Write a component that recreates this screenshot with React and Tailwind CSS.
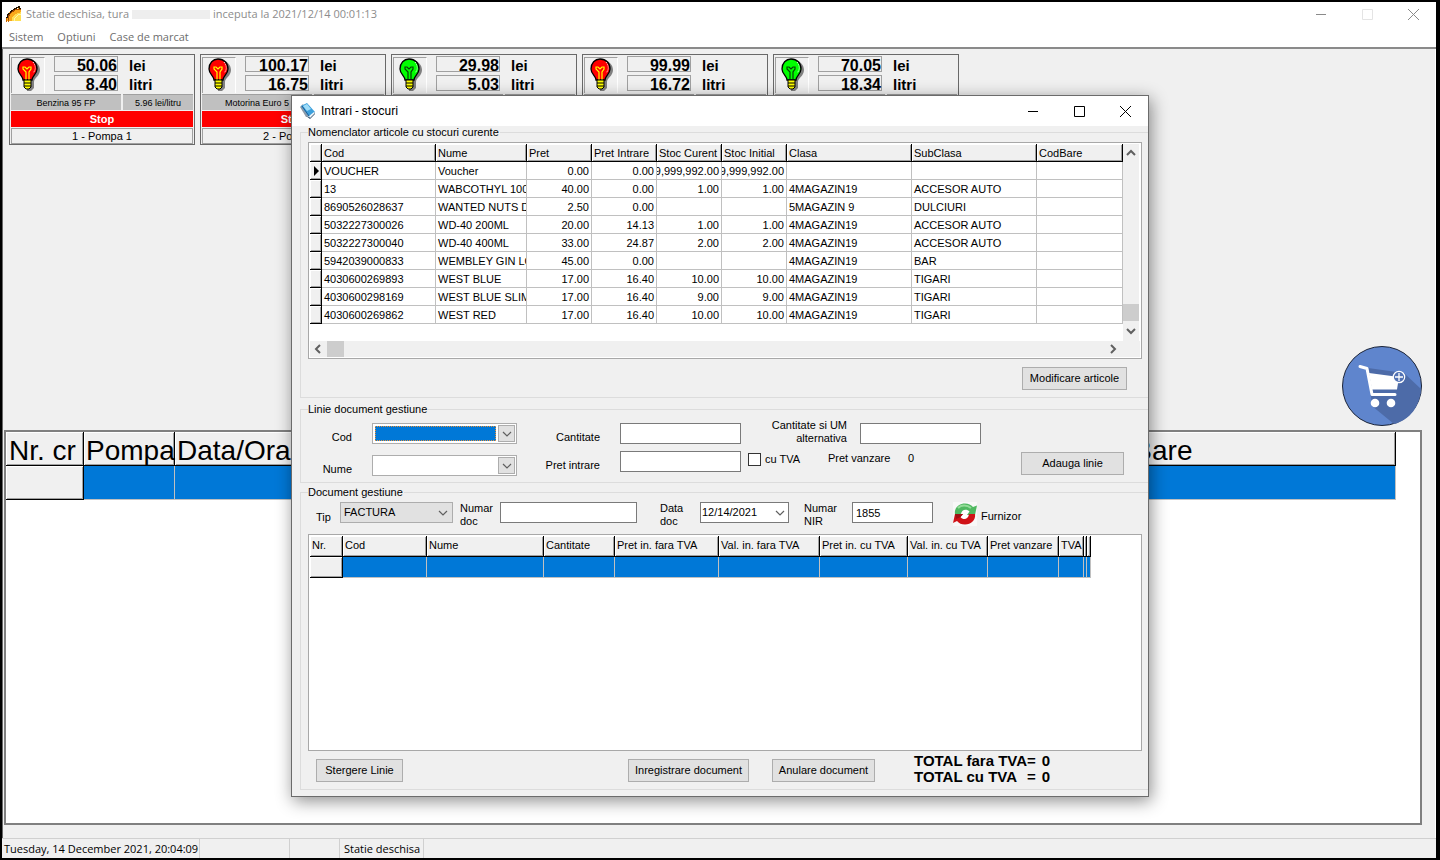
import React from 'react';

const pumps = [
    { id: 1, lei: '50.06', litri: '8.40', fuel: 'Benzina 95 FP', price: '5.96 lei/litru', status: 'Stop', name: '1 - Pompa 1', color: '#ff0000', wire: '#ffff00' },
    { id: 2, lei: '100.17', litri: '16.75', fuel: 'Motorina Euro 5', price: '', status: 'Stop', name: '2 - Pompa 2', color: '#ff0000', wire: '#ffff00' },
    { id: 3, lei: '29.98', litri: '5.03', color: '#00ff00', wire: '#064006' },
    { id: 4, lei: '99.99', litri: '16.72', color: '#ff0000', wire: '#ffff00' },
    { id: 5, lei: '70.05', litri: '18.34', color: '#00ff00', wire: '#064006' },
];

const articleColumns = [
    { name: 'Cod', width: 'w-[114px]' },
    { name: 'Nume', width: 'w-[91px]' },
    { name: 'Pret', width: 'w-[65px]', right: true },
    { name: 'Pret Intrare', width: 'w-[65px]', right: true },
    { name: 'Stoc Curent', width: 'w-[65px]', right: true },
    { name: 'Stoc Initial', width: 'w-[65px]', right: true },
    { name: 'Clasa', width: 'w-[125px]' },
    { name: 'SubClasa', width: 'w-[125px]' },
    { name: 'CodBare', width: 'w-[86px]' },
];

const articles = [
    ['VOUCHER', 'Voucher', '0.00', '0.00', '9,999,992.00', '9,999,992.00', '', '', ''],
    ['13', 'WABCOTHYL 100', '40.00', '0.00', '1.00', '1.00', '4MAGAZIN19', 'ACCESOR AUTO', ''],
    ['8690526028637', 'WANTED NUTS D', '2.50', '0.00', '', '', '5MAGAZIN 9', 'DULCIURI', ''],
    ['5032227300026', 'WD-40 200ML', '20.00', '14.13', '1.00', '1.00', '4MAGAZIN19', 'ACCESOR AUTO', ''],
    ['5032227300040', 'WD-40 400ML', '33.00', '24.87', '2.00', '2.00', '4MAGAZIN19', 'ACCESOR AUTO', ''],
    ['5942039000833', 'WEMBLEY GIN LO', '45.00', '0.00', '', '', '4MAGAZIN19', 'BAR', ''],
    ['4030600269893', 'WEST BLUE', '17.00', '16.40', '10.00', '10.00', '4MAGAZIN19', 'TIGARI', ''],
    ['4030600298169', 'WEST BLUE SLIM', '17.00', '16.40', '9.00', '9.00', '4MAGAZIN19', 'TIGARI', ''],
    ['4030600269862', 'WEST RED', '17.00', '16.40', '10.00', '10.00', '4MAGAZIN19', 'TIGARI', ''],
];

const documentColumns = [
    { name: 'Nr.', width: 'w-[33px]' },
    { name: 'Cod', width: 'w-[84px]' },
    { name: 'Nume', width: 'w-[117px]' },
    { name: 'Cantitate', width: 'w-[71px]' },
    { name: 'Pret in. fara TVA', width: 'w-[104px]' },
    { name: 'Val. in. fara TVA', width: 'w-[101px]' },
    { name: 'Pret in. cu TVA', width: 'w-[88px]' },
    { name: 'Val. in. cu TVA', width: 'w-[80px]' },
    { name: 'Pret vanzare', width: 'w-[71px]' },
    { name: 'TVA', width: 'w-[25px]' },
    { name: '', width: 'w-[3px]' },
    { name: '', width: 'w-[4px]' },
];

const raised = 'bg-[#f0f0f0] border-r border-b border-black shadow-[inset_1px_1px_#ffffff,inset_-1px_-1px_#a0a0a0]';
const field = 'h-[21px] border border-[#7a7a7a] bg-white px-[3px] outline-none';
const push = 'h-[23px] border border-[#adadad] bg-[#e1e1e1] text-center whitespace-nowrap';

function AppIcon() {
    return (
        <svg width="16" height="16" viewBox="0 0 16 16" shapeRendering="crispEdges">
            <path d="M1 15V9L4 5L8 3L15 2V15Z" fill="#f9a81c" />
            <path d="M6 15V12L9 8L15 6V15Z" fill="#ffdf52" />
            <path d="M8 15L9 12L12 9L15 8" fill="none" stroke="#fff3a8" />
            <path d="M0 11H1V8H2V7H4V5H5V4H7V3H8V2H10V1H12V0H13V2H15" fill="none" stroke="#241400" />
            <path d="M2 14V11L5 7L9 4L15 3" fill="none" stroke="#a84a00" />
            <path d="M0 12V16M2 14V16" stroke="#c86400" />
        </svg>
    );
}

function BookIcon() {
    return (
        <svg width="16" height="16" viewBox="0 0 16 16">
            <path d="M0 4L3 1L9 13L6 14Z" fill="#8d9aa8" />
            <path d="M1 3L7 0L15 9L9 14Z" fill="#3da0dc" />
            <path d="M3 3L7 1L11 6L7 8Z" fill="#9fdcf8" />
            <path d="M9 14L15 9L15 11L10 16L6 13Z" fill="#35516c" />
            <path d="M9 13L14 9L15 10L10 15Z" fill="#eef5fa" />
            <path d="M2 3L9 13" stroke="#1c5c94" />
        </svg>
    );
}

function Bulb({ color, wire }) {
    return (
        <svg width="26" height="33" viewBox="0 0 26 33">
            <path d="M13 2C20 2 24 7 24 12C24 18 18 20 18 24V30L15 33H11V24Z" fill="#808080" />
            <path d="M11 1C17 1 21 5 21 11C21 16 16 18 16 22H7C7 18 2 16 2 11C2 5 6 1 11 1Z" fill={color} stroke="#000" strokeWidth="1.3" />
            <path d="M17 4C20 8 20 12 17 15" fill="none" stroke="#fff" strokeDasharray="1 1" />
            <path d="M10 22V14L7 11V9H9L11 11L13 9L15 9V11L13 14V22" fill="none" stroke={wire} strokeWidth="1.2" />
            <path d="M8 22H15V29L13 31H10L8 29Z" fill="#ffff00" stroke="#000" />
            <path d="M8 25H15M8 28H15" stroke="#000" />
        </svg>
    );
}

function CartIcon() {
    return (
        <svg width="80" height="80" viewBox="0 0 80 80">
            <circle cx="40" cy="40" r="39.5" fill="#5f85cd" stroke="#1b2438" />
            <path d="M62 27L79 43C78 60 68 74 52 78L30 60L26 22Z" fill="#4d6ba8" />
            <path d="M18 20.500L25 22.500L30 48.500H53" fill="none" stroke="#fff" strokeWidth="3" strokeLinecap="round" strokeLinejoin="round" />
            <path d="M27 27L57 31L55 43.500H30Z" fill="#fff" />
            <circle cx="33" cy="57" r="4.300" fill="#fff" />
            <circle cx="49" cy="57" r="4.300" fill="#fff" />
            <circle cx="57" cy="31" r="5.700" fill="#5272b4" stroke="#fff" strokeWidth="1.200" />
            <path d="M57 27V35M53 31H61" stroke="#fff" strokeWidth="1.300" />
        </svg>
    );
}

function RefreshIcon() {
    return (
        <svg width="24" height="24" viewBox="0 0 24 24">
            <rect width="24" height="24" fill="#f8f8f8" />
            <circle cx="12" cy="12" r="5" fill="#fff" />
            <path d="M2 12C1 6 6 1.500 12 1.500C15.500 1.500 18 3 20 5L24 3.500L22 13H14L16.500 9.500C14 6.500 8.500 7 8 12Z" fill="#4fb860" />
            <path d="M5 6C8 2.500 14 2.500 18 6" fill="none" stroke="#93dc98" strokeWidth="2" />
            <path d="M22 12C23 18 18 22.500 12 22.500C8.500 22.500 6 21.500 4 19L0 21L2 12L10 12L7.500 15C10 18.500 15.500 17.500 16 12Z" fill="#d01217" />
            <path d="M2 12L10 12L7.500 15L3 17Z" fill="#a01014" />
        </svg>
    );
}

function Chevron({ d = 'M1 3L5 7L9 3', thick }) {
    return (
        <svg width="10" height="10" viewBox="0 0 10 10" fill="none" stroke="#606060" strokeWidth={thick ? 2 : 1.2} aria-hidden="true">
            <path d={d} />
        </svg>
    );
}

function WindowButtons({ main }) {
    return (
        <div className={main ? 'flex text-[#8a8a8a]' : 'flex text-black'}>
            <button aria-label="Minimize" className="w-[45px] h-6 flex items-center justify-center">
                <svg width="11" height="11" stroke="currentColor"><path d="M0 5.500H10" /></svg>
            </button>
            <button aria-label="Maximize" className="w-[46px] h-6 flex items-center justify-center">
                <svg width="11" height="11" fill="none" stroke={main ? '#e4e4e4' : 'currentColor'}><path d="M.5 .5H10.500V10.500H.5Z" /></svg>
            </button>
            <button aria-label="Close" className="w-[46px] h-6 flex items-center justify-center">
                <svg width="11" height="11" stroke="currentColor"><path d="M0 0L11 11M11 0L0 11" /></svg>
            </button>
        </div>
    );
}

function Pump({ pump }) {
    return (
        <div className="w-[186px] h-[91px] shrink-0 border border-[#696969] p-px flex flex-col">
            <div className="flex h-[38px]">
                <div className="w-[34px] h-9 mt-px pl-1 border-t border-l border-[#a0a0a0] border-r border-r-white">
                    <Bulb color={pump.color} wire={pump.wire} />
                </div>
                <div className="ml-[9px] w-16 flex flex-col gap-[3px] text-right text-[16px] leading-[18px] font-bold">
                    <div className="h-4 border border-[#a0a0a0]">{pump.lei}</div>
                    <div className="h-4 border border-[#a0a0a0]">{pump.litri}</div>
                </div>
                <div className="ml-[11px] text-[15px] leading-[19px] font-bold">
                    <div>lei</div>
                    <div>litri</div>
                </div>
            </div>
            <div className="flex gap-[2px] h-4 text-[9px] leading-4 text-center">
                <div className="w-[110px] bg-[#c0c0c0] border-t border-[#a0a0a0]">{pump.fuel}</div>
                <div className="flex-1 bg-[#c0c0c0] border-t border-[#a0a0a0]">{pump.price}</div>
            </div>
            <div className="mt-px h-4 bg-[#ff0000] text-white text-[11px] leading-4 font-bold text-center">{pump.status}</div>
            <div className="mt-px flex-1 border border-[#a0a0a0] text-[11px] leading-[14px] text-center">{pump.name}</div>
        </div>
    );
}

function ArticleTable() {
    return (
        <div className="h-[217px] border border-[#a8a8a8] bg-white p-px flex flex-col">
            <div className="flex flex-1 min-h-0">
                <div className="flex-1 overflow-hidden">
                    <table className="table-fixed w-[813px] border-separate border-spacing-0 text-left">
                        <thead>
                            <tr>
                                <th className={`w-3 h-[18px] p-0 ${raised}`}></th>
                                {articleColumns.map((col) => (
                                    <th key={col.name} className={`${col.width} h-[18px] p-0 pl-[2px] font-normal leading-[16px] whitespace-nowrap overflow-hidden ${raised}`}>{col.name}</th>
                                ))}
                            </tr>
                        </thead>
                        <tbody>
                            {articles.map((row, i) => (
                                <tr key={row[0]}>
                                    <td className={`h-[18px] p-0 ${raised}`}>
                                        {i === 0 && <svg width="10" height="12" className="block"><path d="M4 1V11L9 6Z" /></svg>}
                                    </td>
                                    {row.map((value, j) => (
                                        <td key={j} className="h-[18px] p-0 border-r border-b border-[#c0c0c0]">
                                            <div className={articleColumns[j].right ? 'flex justify-end overflow-hidden whitespace-nowrap pr-[2px] leading-[16px]' : 'overflow-hidden whitespace-nowrap pl-[2px] leading-[16px]'}>{value}</div>
                                        </td>
                                    ))}
                                </tr>
                            ))}
                        </tbody>
                    </table>
                </div>
                <div className="w-[17px] bg-[#f0f0f0] flex flex-col items-center border-r border-white">
                    <div className="h-[17px] flex items-center"><Chevron d="M1 7L5 3L9 7" thick /></div>
                    <div className="mt-auto h-[17px] w-full bg-[#cdcdcd]"></div>
                    <div className="h-5 flex items-center"><Chevron thick /></div>
                </div>
            </div>
            <div className="h-4 bg-[#f0f0f0] flex items-center pl-[3px] pr-[22px]">
                <Chevron d="M7 1L3 5L7 9" thick />
                <div className="ml-1 mr-auto w-[17px] h-full bg-[#cdcdcd]"></div>
                <Chevron d="M3 1L7 5L3 9" thick />
            </div>
        </div>
    );
}

function DocumentTable() {
    return (
        <div className="h-[217px] border border-[#a8a8a8] bg-white p-px overflow-hidden">
            <table className="table-fixed w-[781px] border-separate border-spacing-0 text-left">
                <thead>
                    <tr>
                        {documentColumns.map((col, i) => (
                            <th key={i} className={`${col.width} h-[21px] p-0 pb-[2px] font-normal whitespace-nowrap overflow-hidden ${raised}`}>
                                {col.name && <span className="pl-[2px]">{col.name}</span>}
                            </th>
                        ))}
                    </tr>
                </thead>
                <tbody>
                    <tr>
                        {documentColumns.map((col, i) => (
                            <td key={i} className={i === 0 ? `h-[21px] p-0 ${raised}` : 'h-[21px] p-0 bg-[#0078d7] border-r border-b border-[#c0c0c0]'}></td>
                        ))}
                    </tr>
                </tbody>
            </table>
        </div>
    );
}

function Combo({ id, active }) {
    return (
        <div className="w-[145px] h-[21px] border border-[#adadad] bg-white flex p-px">
            <select id={id} className={active ? 'appearance-none flex-1 m-px mr-[2px] bg-[#0078d7] border border-dotted border-[#e8913a] outline-none' : 'appearance-none flex-1 bg-white outline-none'}></select>
            <span className="w-[17px] border border-[#adadad] bg-[#e1e1e1] flex items-center justify-center"><Chevron /></span>
        </div>
    );
}

function Group({ title, className, children }) {
    return (
        <fieldset className={`ml-2 border border-r-0 border-[#dcdcdc] pl-[7px] pr-[6px] ${className}`}>
            <legend className="h-[13px] leading-[13px] pr-px">{title}</legend>
            {children}
        </fieldset>
    );
}

function StockDialog() {
    return (
        <div role="dialog" aria-label="Intrari - stocuri" className="absolute top-[93px] left-[289px] right-[287px] min-w-[858px] h-[702px] border border-[#6b6b6b] bg-[#f0f0f0] shadow-[2px_4px_16px_rgba(0,0,0,0.45)] text-[11px] leading-[13px]">
            <div className="h-[30px] bg-white flex items-center pl-2 font-[Roboto,sans-serif] text-[12px]">
                <BookIcon />
                <h2 className="ml-[5px] mr-auto">Intrari - stocuri</h2>
                <WindowButtons />
            </div>

            <Group title="Nomenclator articole cu stocuri curente" className="h-[272px]">
                <div className="pt-[3px]">
                    <ArticleTable />
                    <div className="flex justify-end pt-2 pr-[15px]">
                        <button className={`w-[105px] ${push}`}>Modificare articole</button>
                    </div>
                </div>
            </Group>

            <Group title="Linie document gestiune" className="mt-[5px] h-[80px]">
                <div className="flex items-start pt-[7px]">
                    <div className="w-11 shrink-0 text-right flex flex-col gap-[19px] pt-2">
                        <label htmlFor="cod">Cod</label>
                        <label htmlFor="nume">Nume</label>
                    </div>
                    <div className="ml-5 flex flex-col gap-[11px]">
                        <Combo id="cod" active />
                        <Combo id="nume" />
                    </div>
                    <div className="w-[83px] text-right flex flex-col gap-[15px] pt-2">
                        <label htmlFor="cantitate">Cantitate</label>
                        <label htmlFor="pret">Pret intrare</label>
                    </div>
                    <div className="ml-5 w-[121px] flex flex-col gap-[7px]">
                        <input id="cantitate" className={field} />
                        <input id="pret" className={field} />
                    </div>
                    <div className="ml-[7px] flex flex-col">
                        <div className="flex">
                            <label htmlFor="alt" className="w-[99px] text-right -mt-1">Cantitate si UM alternativa</label>
                            <input id="alt" className={`ml-[13px] w-[121px] ${field}`} />
                        </div>
                        <div className="flex mt-[7px]">
                            <label className="flex items-center gap-1 w-[80px] pt-px">
                                <input type="checkbox" className="appearance-none w-[13px] h-[13px] border border-[#333333] bg-white" />
                                cu TVA
                            </label>
                            <span className="w-20">Pret vanzare</span>
                            <span>0</span>
                        </div>
                    </div>
                    <button className={`ml-auto mr-[18px] mt-[29px] w-[103px] ${push}`}>Adauga linie</button>
                </div>
            </Group>

            <Group title="Document gestiune" className="mt-[3px] h-[304px]">
                <div className="flex items-start pt-[3px] pl-2">
                    <label htmlFor="tip" className="w-6 pt-[9px]">Tip</label>
                    <div className="w-[113px] h-[21px] border border-[#adadad] bg-[#e1e1e1] flex items-center pr-1">
                        <select id="tip" className="appearance-none flex-1 pl-[3px] outline-none">
                            <option>FACTURA</option>
                        </select>
                        <Chevron />
                    </div>
                    <label htmlFor="numar" className="ml-[7px] w-10">Numar doc</label>
                    <input id="numar" className={`w-[137px] ${field}`} />
                    <label htmlFor="data" className="ml-[23px] w-10 pr-3">Data doc</label>
                    <div className="w-[89px] h-[21px] border border-[#7a7a7a] bg-white flex items-center pr-[3px]">
                        <input id="data" defaultValue="12/14/2021" className="w-0 flex-1 pl-px outline-none" />
                        <Chevron />
                    </div>
                    <label htmlFor="nir" className="ml-[15px] w-12 pr-2">Numar NIR</label>
                    <input id="nir" defaultValue="1855" className={`w-[81px] ${field}`} />
                    <button className="ml-5 flex items-center gap-1">
                        <RefreshIcon />
                        <span className="pt-1">Furnizor</span>
                    </button>
                </div>
                <div className="pt-[6px]">
                    <DocumentTable />
                </div>
                <div className="flex pt-2 pl-2">
                    <button className={`w-[87px] ${push}`}>Stergere Linie</button>
                    <button className={`ml-[225px] w-[121px] ${push}`}>Inregistrare document</button>
                    <button className={`ml-[23px] w-[103px] ${push}`}>Anulare document</button>
                    <table className="ml-[39px] -mt-[6px] text-[15px] leading-4 font-bold whitespace-nowrap">
                        <tbody>
                            <tr><td className="p-0">TOTAL fara TVA</td><td className="p-0">=</td><td className="p-0 pl-1.5">0</td></tr>
                            <tr><td className="p-0">TOTAL cu TVA</td><td className="p-0">=</td><td className="p-0 pl-1.5">0</td></tr>
                        </tbody>
                    </table>
                </div>
            </Group>
        </div>
    );
}

export default function App() {
    return (
        <div className="relative h-screen min-h-[860px] flex flex-col overflow-hidden bg-[#f0f0f0] border-2 border-r-4 border-black font-['Liberation_Sans',Arial,sans-serif] text-[11px] text-black">
            <header className="bg-white h-[47px] border-b-2 border-[#8a8a8a] font-['Open_Sans',sans-serif] text-[11px]">
                <div className="h-6 flex items-center pl-1 text-[#8c8c8c]">
                    <AppIcon />
                    <h1 className="ml-1 mr-auto flex items-center gap-[3px]">
                        Statie deschisa, tura
                        <span className="w-[78px] h-[9px] bg-[#eeeeee]"></span>
                        inceputa la 2021/12/14 00:01:13
                    </h1>
                    <WindowButtons main />
                </div>
                <nav className="flex gap-[14px] pl-[7px] leading-[21px] text-[#6d6d6d]">
                    <button>Sistem</button>
                    <button>Optiuni</button>
                    <button>Case de marcat</button>
                </nav>
            </header>

            <main className="flex-1 min-h-0 flex flex-col border-l border-[#696969] border-r border-r-white pt-[5px] pl-px pr-[13px] pb-[13px]">
                <div className="flex gap-[5px] pl-[5px]">
                    {pumps.map((pump) => <Pump key={pump.id} pump={pump} />)}
                </div>
                <div className="mt-[201px] mb-1 flex justify-end">
                    <button aria-label="Adauga in cos"><CartIcon /></button>
                </div>
                <div className="flex-1 min-h-0 border-2 border-[#808080] bg-white overflow-hidden">
                    <table className="table-fixed w-full max-w-[1390px] border-separate border-spacing-0 text-left text-[28px] leading-[29px]">
                        <thead>
                            <tr>
                                <th className={`w-[78px] h-[34px] p-0 pt-1 pl-[3px] font-normal whitespace-nowrap ${raised}`}>Nr. cr</th>
                                <th className={`w-[91px] p-0 pt-1 pl-[2px] font-normal whitespace-nowrap ${raised}`}>Pompa</th>
                                <th className={`w-[905px] p-0 pt-1 pl-[2px] font-normal whitespace-nowrap ${raised}`}>Data/Ora</th>
                                <th className={`p-0 pt-1 pl-[2px] font-normal whitespace-nowrap ${raised}`}>CodBare</th>
                            </tr>
                        </thead>
                        <tbody>
                            <tr>
                                <td className={`h-[34px] p-0 ${raised}`}></td>
                                <td className="p-0 bg-[#0078d7] border-r border-b border-[#c0c0c0]"></td>
                                <td className="p-0 bg-[#0078d7] border-b border-[#c0c0c0]"></td>
                                <td className="p-0 bg-[#0078d7] border-r border-b border-[#c0c0c0]"></td>
                            </tr>
                        </tbody>
                    </table>
                </div>
            </main>

            <footer className="h-5 border-t border-[#d0d0d0] flex font-['Open_Sans',sans-serif] text-[11px] leading-5">
                <div className="w-[198px] pl-[2px] border-r border-[#d0d0d0] whitespace-nowrap">Tuesday, 14 December 2021, 20:04:09</div>
                <div className="w-[90px] border-r border-[#d0d0d0]"></div>
                <div className="w-[50px] border-r border-[#d0d0d0]"></div>
                <div className="w-[84px] pl-1 border-r border-[#d0d0d0] whitespace-nowrap">Statie deschisa</div>
            </footer>

            <StockDialog />
        </div>
    );
}
